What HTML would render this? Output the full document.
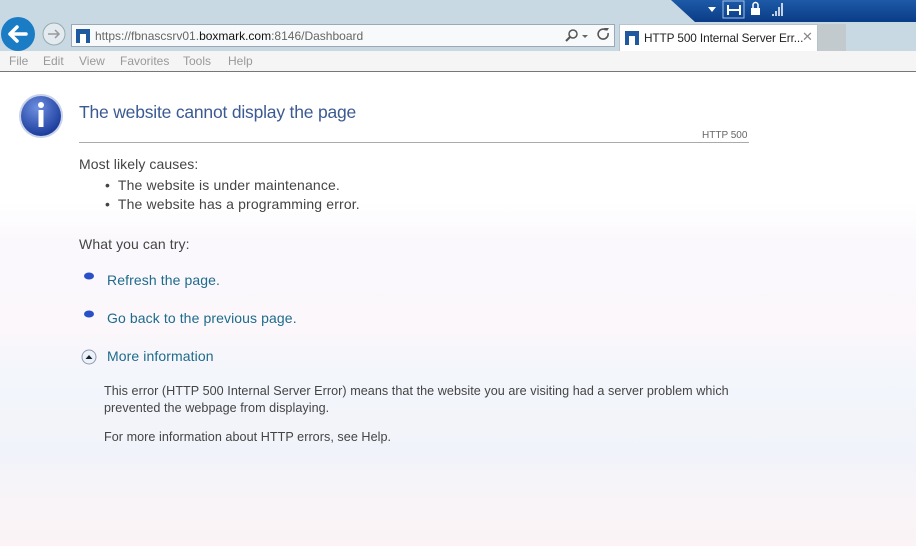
<!DOCTYPE html>
<html><head><meta charset="utf-8"><style>
*{margin:0;padding:0;box-sizing:border-box}
body{width:916px;height:546px;overflow:hidden;font-family:"Liberation Sans",sans-serif;position:relative;background:#fff}
.top{position:absolute;left:0;top:0;width:916px;height:51px;background:#c9d9e3}
.blue{position:absolute;right:0;top:0;width:245px;height:22px;background:linear-gradient(#1d5aa8,#0a3c86);clip-path:polygon(0 0,100% 0,100% 100%,24px 100%)}
.addr{position:absolute;left:71px;top:24px;width:544px;height:23px;background:#f7f9fb;border:1px solid #9aa9b5}
.tab{position:absolute;left:619px;top:24px;width:199px;height:27px;background:#fff;border:1px solid #b8c4cc;border-bottom:none}
.tab2{position:absolute;left:818px;top:24px;width:28px;height:27px;background:#c3cacd}
.menu{position:absolute;left:0;top:51px;width:916px;height:21px;background:#f5f5f5;border-bottom:1px solid #777;font-size:12px;color:#999}
.menu span{position:absolute;top:3px}
.page{position:absolute;left:0;top:72px;width:916px;height:474px;background:linear-gradient(#fff 0,#fff 130px,#faf8fc 170px,#fbf7fb 260px,#f3f6fb 300px,#f1f3fa 380px,#f8f4f8 430px,#fbf3f5 474px)}
.t{position:absolute;white-space:nowrap}
</style></head><body>
<div class="top"></div>
<div class="blue"></div>
<svg style="position:absolute;left:700px;top:0" width="90" height="20"><path d="M8 7h8l-4 5z" fill="#fff"/><rect x="23" y="1" width="21" height="17" fill="none" stroke="#9fc0e8"/><path d="M28 5v10M40 5v10M28 10h12" stroke="#fff" stroke-width="2"/><rect x="51" y="8" width="9" height="7" fill="#fff"/><path d="M53 8v-3a2.5 2.5 0 0 1 5 0v3" stroke="#fff" stroke-width="1.5" fill="none"/><path d="M73 14v2M76 11v5M79 7v9M82 3v13" stroke="#fff" stroke-width="1.5"/></svg>
<svg style="position:absolute;left:0;top:17" width="70" height="36"><circle cx="18" cy="17" r="17" fill="#1a7cc4"/><path d="M10 17h16M10 17l7-7M10 17l7 7" stroke="#fff" stroke-width="3.5" fill="none" stroke-linecap="round"/><circle cx="54" cy="17" r="11" fill="#e3eaf0" stroke="#9aa"/><path d="M48 17h11M55 13l4 4-4 4" stroke="#999" stroke-width="1.5" fill="none"/></svg>
<div class="addr"></div>
<svg style="position:absolute;left:76px;top:29px" width="14" height="14"><rect width="14" height="14" fill="#1f5aa0"/><path d="M4 14V5h6v9" fill="#fff"/></svg>
<div class="t" style="left:95px;top:29px;font-size:12px;color:#666">https://fbnascsrv01.<span style="color:#111">boxmark.com</span>:8146/Dashboard</div>
<svg style="position:absolute;left:562px;top:27px" width="50" height="16"><circle cx="11" cy="7" r="4" fill="none" stroke="#555" stroke-width="1.5"/><path d="M8 10l-4 4" stroke="#555" stroke-width="2"/><path d="M20 8h6l-3 3z" fill="#666"/><path d="M46 6a5 5 0 1 1-2-3" fill="none" stroke="#555" stroke-width="1.6"/><path d="M42 1l3 3 2-3" fill="#555"/></svg>
<div class="tab"></div><div class="tab2"></div>
<svg style="position:absolute;left:625px;top:31px" width="14" height="14"><rect width="14" height="14" fill="#1f5aa0"/><path d="M4 14V5h6v9" fill="#fff"/></svg>
<div class="t" style="left:644px;top:31px;font-size:11.8px;color:#222;letter-spacing:-0.1px">HTTP 500 Internal Server Err...</div>
<div class="t" style="left:802px;top:29px;font-size:13px;color:#888">✕</div>
<div class="menu"><span style="left:9px">File</span><span style="left:43px">Edit</span><span style="left:79px">View</span><span style="left:120px">Favorites</span><span style="left:183px">Tools</span><span style="left:228px">Help</span></div>
<div class="page"></div>
<svg style="position:absolute;left:18px;top:93px" width="48" height="48"><defs><radialGradient id="g" cx="40%" cy="30%" r="70%"><stop offset="0" stop-color="#6d8fe0"/><stop offset="1" stop-color="#1c3c9c"/></radialGradient></defs><circle cx="23" cy="23" r="22" fill="#c8d2e8"/><circle cx="23" cy="23" r="20" fill="url(#g)"/><circle cx="23" cy="12" r="3" fill="#fff"/><rect x="20.5" y="17" width="5" height="17" fill="#fff"/></svg>
<div class="t" style="left:79px;top:102px;font-size:17.5px;color:#3c5a92;letter-spacing:-0.2px">The website cannot display the page</div>
<div style="position:absolute;left:79px;top:142px;width:670px;height:1px;background:#aaa"></div>
<div class="t" style="left:702px;top:130px;font-size:10px;color:#666">HTTP 500</div>
<div class="t" style="left:79px;top:156px;font-size:14px;color:#444;letter-spacing:0.1px">Most likely causes:</div>
<div class="t" style="left:105px;top:177px;font-size:14px;color:#444;letter-spacing:0.15px">•&nbsp; The website is under maintenance.</div>
<div class="t" style="left:105px;top:196px;font-size:14px;color:#444;letter-spacing:0.15px">•&nbsp; The website has a programming error.</div>
<div class="t" style="left:79px;top:236px;font-size:14px;color:#444;letter-spacing:0.1px">What you can try:</div>
<svg style="position:absolute;left:84px;top:272px" width="10" height="50"><ellipse cx="5" cy="4" rx="5" ry="3.5" fill="#2a50c8"/><ellipse cx="5" cy="42" rx="5" ry="3.5" fill="#2a50c8"/></svg>
<div class="t" style="left:107px;top:272px;font-size:14px;color:#1e6b8c;letter-spacing:0.1px">Refresh the page.</div>
<div class="t" style="left:107px;top:310px;font-size:14px;color:#1e6b8c;letter-spacing:0.1px">Go back to the previous page.</div>
<svg style="position:absolute;left:81px;top:349px" width="16" height="16"><circle cx="8" cy="8" r="7" fill="#eef2f8" stroke="#8a9ab0"/><path d="M4.5 10l3.5-4 3.5 4z" fill="#123"/></svg>
<div class="t" style="left:107px;top:348px;font-size:14px;color:#1e6b8c;letter-spacing:0.1px">More information</div>
<div class="t" style="left:104px;top:383px;font-size:12.6px;color:#444;line-height:17px;letter-spacing:0.05px">This error (HTTP 500 Internal Server Error) means that the website you are visiting had a server problem which<br>prevented the webpage from displaying.</div>
<div class="t" style="left:104px;top:430px;font-size:12.6px;color:#444;letter-spacing:0.05px">For more information about HTTP errors, see Help.</div>
</body></html>
